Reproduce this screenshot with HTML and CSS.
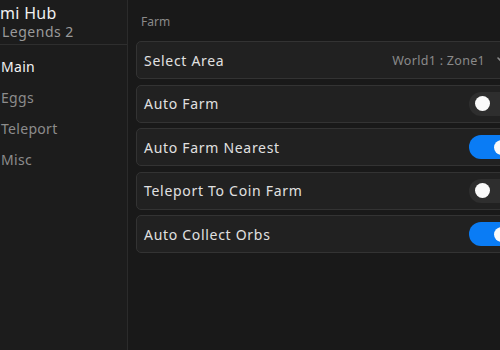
FILE: index.html
```html
<!DOCTYPE html>
<html lang="en">
<head>
    <meta charset="UTF-8">
    <title>Hub</title>
    <link rel="stylesheet" href="styles.css">
</head>
<body>
    <div class="window">
        <aside class="sidebar">
            <div class="brand">
                <div class="brand-name">mi Hub</div>
                <div class="brand-sub">Legends 2</div>
            </div>
            <nav class="tabs">
                <div class="tab active">Main</div>
                <div class="tab">Eggs</div>
                <div class="tab">Teleport</div>
                <div class="tab">Misc</div>
            </nav>
        </aside>

        <main class="content">
            <div class="section-title">Farm</div>

            <div class="row">
                <span class="label">Select Area</span>
                <span class="dropdown">
                    <span class="value">World1 : Zone1</span>
                    <svg class="chevron" width="10" height="10" viewBox="0 0 10 10">
                        <path d="M1 3 L5 7 L9 3" fill="none" stroke="#8a8a8a" stroke-width="1.6" stroke-linecap="round"/>
                    </svg>
                </span>
            </div>
            <div class="row">
                <span class="label">Auto Farm</span>
                <span class="toggle"><span class="knob"></span></span>
            </div>
            <div class="row">
                <span class="label">Auto Farm Nearest</span>
                <span class="toggle on"><span class="knob"></span></span>
            </div>
            <div class="row">
                <span class="label">Teleport To Coin Farm</span>
                <span class="toggle"><span class="knob"></span></span>
            </div>
            <div class="row">
                <span class="label">Auto Collect Orbs</span>
                <span class="toggle on"><span class="knob"></span></span>
            </div>
        </main>
    </div>
</body>
</html>
```

FILE: styles.css
```css
html, body {
    margin: 0;
    height: 100%;
    overflow: hidden;
    background: #191919;
}
body {
    font-family: "Noto Sans", Lato, sans-serif;
    color: #e2e2e2;
}
.window {
    display: flex;
    width: 530px;
    height: 350px;
}
.sidebar {
    width: 127px;
    flex-shrink: 0;
    background: #1c1c1c;
    border-right: 1px solid #2b2b2b;
}
.brand {
    padding-top: 4px;
    height: 40px;
    border-bottom: 1px solid #2e2e2e;
}
.brand-name {
    font-size: 16px;
    color: #f0f0f0;
    line-height: 19px;
    letter-spacing: 0.3px;
}
.brand-sub {
    font-size: 14px;
    color: #9a9a9a;
    line-height: 18px;
    padding-left: 2px;
    letter-spacing: 0.5px;
}
.tabs {
    padding-top: 6px;
}
.tab {
    font-size: 14px;
    line-height: 31px;
    color: #8c8c8c;
    padding-left: 1px;
    letter-spacing: 0.3px;
}
.tab.active {
    color: #f2f2f2;
}
.content {
    flex: 1;
    padding: 14px 0 0 8px;
}
.section-title {
    font-size: 12px;
    color: #8a8a8a;
    padding-left: 5px;
    line-height: 16px;
    margin-bottom: 11px;
}
.row {
    display: flex;
    align-items: center;
    justify-content: space-between;
    height: 36px;
    margin-bottom: 5.5px;
    padding-left: 7px;
    background: #212121;
    border: 1px solid #333;
    border-radius: 5px;
}
.label {
    font-size: 14px;
    letter-spacing: 0.7px;
    color: #e0e0e0;
}
.dropdown {
    display: flex;
    align-items: center;
    gap: 12px;
    margin-right: 22px;
}
.value {
    font-size: 12.5px;
    color: #8a8a8a;
    letter-spacing: 0.3px;
}
.toggle {
    width: 46px;
    height: 24px;
    border-radius: 12px;
    background: #2e2e2e;
    margin-right: 14px;
    display: flex;
    align-items: center;
    padding: 0 6px;
    box-sizing: border-box;
}
.knob {
    width: 15px;
    height: 15px;
    border-radius: 50%;
    background: #fafafa;
}
.toggle.on {
    background: #0a7cf5;
    justify-content: flex-end;
}
```
